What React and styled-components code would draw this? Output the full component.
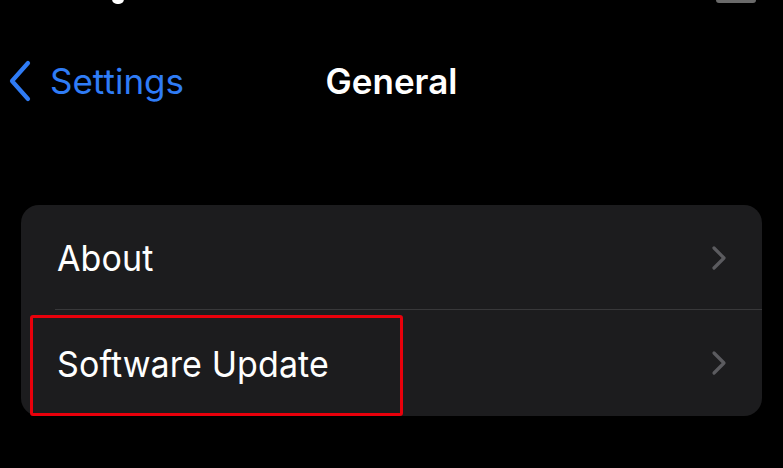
import React from "react";
import styled, { createGlobalStyle } from "styled-components";

const Global = createGlobalStyle`
  html, body { margin: 0; padding: 0; background: #000; }
  body { font-family: Inter, "Liberation Sans", sans-serif; -webkit-font-smoothing: antialiased; }
`;

const Page = styled.div`
  width: 783px;
  height: 468px;
  background: #000;
  overflow: hidden;
  position: relative;
`;

const StatusBar = styled.div`
  height: 6px;
  position: relative;
`;

const StatusDot = styled.div`
  position: absolute;
  left: 112px;
  top: -6px;
  width: 12px;
  height: 10px;
  border-radius: 5px;
  background: #fff;
`;

const StatusBattery = styled.div`
  position: absolute;
  left: 716px;
  top: -4px;
  width: 40px;
  height: 7px;
  border-radius: 3px;
  background: #6a6a6a;
`;

const NavBar = styled.div`
  height: 150px;
  position: relative;
  display: flex;
  align-items: flex-start;
  padding-top: 51px;
  box-sizing: border-box;
`;

const BackButton = styled.div`
  display: flex;
  align-items: center;
  gap: 18px;
  padding-left: 8px;
  color: #2f7cf6;
  font-size: 35px;
  height: 48px;
`;

const Title = styled.div`
  position: absolute;
  left: 0;
  right: 0;
  top: 51px;
  height: 48px;
  display: flex;
  align-items: center;
  justify-content: center;
  color: #fff;
  font-size: 35px;
  font-weight: 600;
  pointer-events: none;
`;

const Card = styled.div`
  margin: 49px 21px 0 21px;
  background: #1c1c1e;
  border-radius: 18px;
  position: relative;
`;

const Row = styled.div`
  position: relative;
  height: ${(p) => p.$h}px;
  display: flex;
  align-items: center;
  justify-content: space-between;
  padding: 0 34px 0 36px;
  box-sizing: border-box;
  color: #fff;
  font-size: 34px;
  letter-spacing: 0.1px;
  &::after {
    content: "";
    display: ${(p) => (p.$divider ? "block" : "none")};
    position: absolute;
    left: 34px;
    right: 0;
    bottom: 0;
    height: 1px;
    background: #38383a;
  }
`;

const Label = styled.span`
  display: block;
  transform: scaleY(1.06);
`;

const Highlight = styled.div`
  position: absolute;
  left: 9px;
  top: 5px;
  width: 373px;
  height: 101px;
  border: 3px solid #e8000b;
  border-radius: 3px;
  box-sizing: border-box;
  pointer-events: none;
`;

const Chevron = () => (
  <svg width="18" height="26" viewBox="0 0 18 26">
    <path d="M4 3 L14 13 L4 23" fill="none" stroke="#5b5b5f" strokeWidth="3.2" strokeLinecap="round" strokeLinejoin="round" />
  </svg>
);

const BackChevron = () => (
  <svg width="24" height="42" viewBox="0 0 24 42">
    <path d="M20 3 L4 21 L20 39" fill="none" stroke="#2f7cf6" strokeWidth="4.2" strokeLinecap="round" strokeLinejoin="round" />
  </svg>
);

export default function App() {
  return (
    <Page>
      <Global />
      <StatusBar>
        <StatusDot />
        <StatusBattery />
      </StatusBar>
      <NavBar>
        <BackButton>
          <BackChevron />
          <span>Settings</span>
        </BackButton>
        <Title>General</Title>
      </NavBar>
      <Card>
        <Row $h={105} $divider>
          <Label>About</Label>
          <Chevron />
        </Row>
        <Row $h={106}>
          <Label>Software Update</Label>
          <Chevron />
          <Highlight />
        </Row>
      </Card>
    </Page>
  );
}
